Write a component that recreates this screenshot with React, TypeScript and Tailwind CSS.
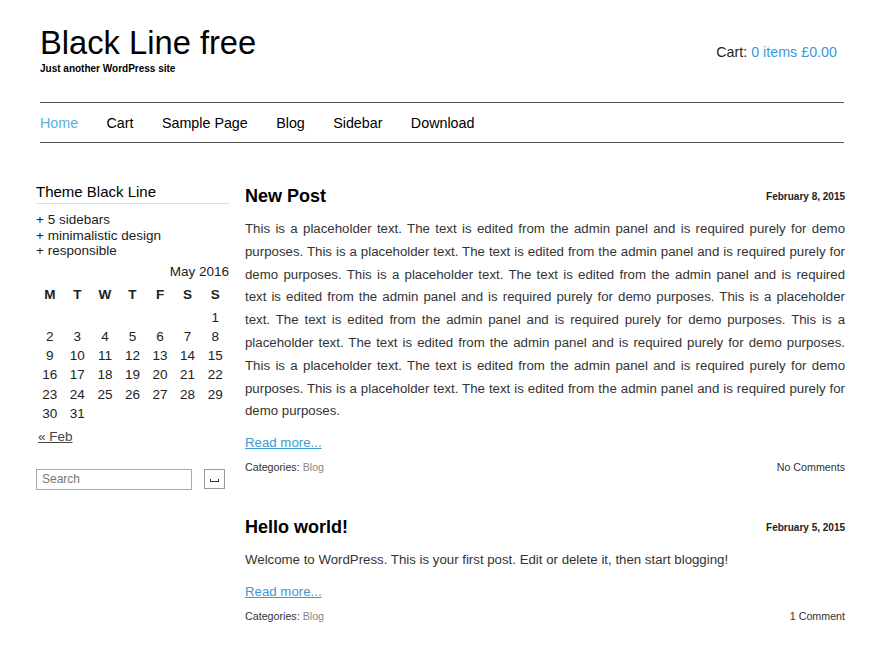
import React from "react";

const NAV = ["Home", "Cart", "Sample Page", "Blog", "Sidebar", "Download"];

const WEEKS: (number | null)[][] = [
  [null, null, null, null, null, null, 1],
  [2, 3, 4, 5, 6, 7, 8],
  [9, 10, 11, 12, 13, 14, 15],
  [16, 17, 18, 19, 20, 21, 22],
  [23, 24, 25, 26, 27, 28, 29],
  [30, 31, null, null, null, null, null],
];

interface Post {
  title: string;
  date: string;
  lines: string[];
  comments: string;
}

// lines of the first post, broken as the theme breaks them
const POSTS: Post[] = [
  {
    title: "New Post",
    date: "February 8, 2015",
    lines: [
      "This is a placeholder text. The text is edited from the admin panel and is required purely for demo",
      "purposes. This is a placeholder text. The text is edited from the admin panel and is required purely for",
      "demo purposes. This is a placeholder text. The text is edited from the admin panel and is required",
      "text is edited from the admin panel and is required purely for demo purposes. This is a placeholder",
      "text. The text is edited from the admin panel and is required purely for demo purposes. This is a",
      "placeholder text. The text is edited from the admin panel and is required purely for demo purposes.",
      "This is a placeholder text. The text is edited from the admin panel and is required purely for demo",
      "purposes. This is a placeholder text. The text is edited from the admin panel and is required purely for",
      "demo purposes.",
    ],
    comments: "No Comments",
  },
  {
    title: "Hello world!",
    date: "February 5, 2015",
    lines: ["Welcome to WordPress. This is your first post. Edit or delete it, then start blogging!"],
    comments: "1 Comment",
  },
];

function PostItem({ post }: { post: Post }) {
  return (
    <article className="mb-[40px]">
      <div className="flex items-center justify-between">
        <h2 className="text-[18px] font-bold leading-[24px] text-black">{post.title}</h2>
        <span className="text-[10px] font-bold text-[#222]">{post.date}</span>
      </div>
      <div className="mt-[10px] text-[13.25px] leading-[22.8px] text-[#333]">
        {post.lines.map((l, i) => (
          <p
            key={i}
            className={
              i < post.lines.length - 1
                ? "text-justify whitespace-nowrap [text-align-last:justify]"
                : "text-left"
            }
          >
            {l}
          </p>
        ))}
      </div>
      <a href="#" className="mt-[9px] block text-[13.25px] leading-[22px] text-[#3a9ad9] underline">
        Read more...
      </a>
      <div className="mt-[5px] flex justify-between text-[10.7px] leading-[16px] text-[#333]">
        <span>
          Categories: <a href="#" className="text-[#888]">Blog</a>
        </span>
        <span>{post.comments}</span>
      </div>
    </article>
  );
}

export default function App() {
  return (
    <div className="min-h-[660px] bg-white font-['Liberation_Sans',Arial,sans-serif] text-[#222]">
      {/* header */}
      <header className="flex items-start justify-between pl-[40px] pr-[43px] pt-[25px]">
        <div>
          <h1 className="text-[32.7px] leading-[36px] text-black">Black Line free</h1>
          <p className="text-[10px] font-bold text-black">Just another WordPress site</p>
        </div>
        <div className="mt-[17px] text-[14.3px] text-[#222]">
          Cart: <a href="#" className="text-[#3a9ad9]">0 items £0.00</a>
        </div>
      </header>

      {/* menu */}
      <nav className="mx-[40px] mt-[26px] w-[804px] border-y border-[#555] pt-[12px] pb-[11px]">
        <ul className="flex gap-[28.4px] text-[14.3px] leading-[16px]">
          {NAV.map((item, i) => (
            <li key={item} className={i === 0 ? "text-[#5aaee0]" : "text-black"}>
              {item}
            </li>
          ))}
        </ul>
      </nav>

      <div className="mt-[39px] flex pl-[36px] pr-[35px]">
        {/* sidebar */}
        <aside className="w-[193px] shrink-0 text-[13.5px] text-[#222]">
          <h3 className="border-b border-[#ddd] pb-[1px] text-[15px] leading-[20px] text-black">
            Theme Black Line
          </h3>
          <ul className="mt-[8px] leading-[15.5px]">
            <li>+ 5 sidebars</li>
            <li>+ minimalistic design</li>
            <li>+ responsible</li>
          </ul>
          <table className="mt-[3px] w-[193px] table-fixed text-center leading-[19.2px]">
            <caption className="text-right">May 2016</caption>
            <thead>
              <tr>
                {["M", "T", "W", "T", "F", "S", "S"].map((d, i) => (
                  <th key={i} className="h-[27px] font-bold">
                    {d}
                  </th>
                ))}
              </tr>
            </thead>
            <tbody>
              {WEEKS.map((w, i) => (
                <tr key={i}>
                  {w.map((d, j) => (
                    <td key={j} className="h-[19.2px] p-0">
                      {d ?? ""}
                    </td>
                  ))}
                </tr>
              ))}
            </tbody>
          </table>
          <a href="#" className="mt-[5px] ml-[2px] block leading-[18px] text-[#444] underline">
            « Feb
          </a>
          <form className="mt-[23px] flex items-center justify-between">
            <input
              placeholder="Search"
              className="h-[21px] w-[156px] border border-[#aaa] px-[5px] text-[12px] text-[#333] placeholder:text-[#777] outline-none"
            />
            <button
              type="button"
              className="mr-[4px] flex h-[20px] w-[21px] items-end justify-center border border-[#999] pb-[6px]"
            >
              <span className="block h-[3px] w-[9px] border-x border-b border-[#333]" />
            </button>
          </form>
        </aside>

        {/* posts */}
        <main className="ml-[16px] flex-1 pt-[2px]">
          {POSTS.map((p) => (
            <PostItem key={p.title} post={p} />
          ))}
        </main>
      </div>
    </div>
  );
}
